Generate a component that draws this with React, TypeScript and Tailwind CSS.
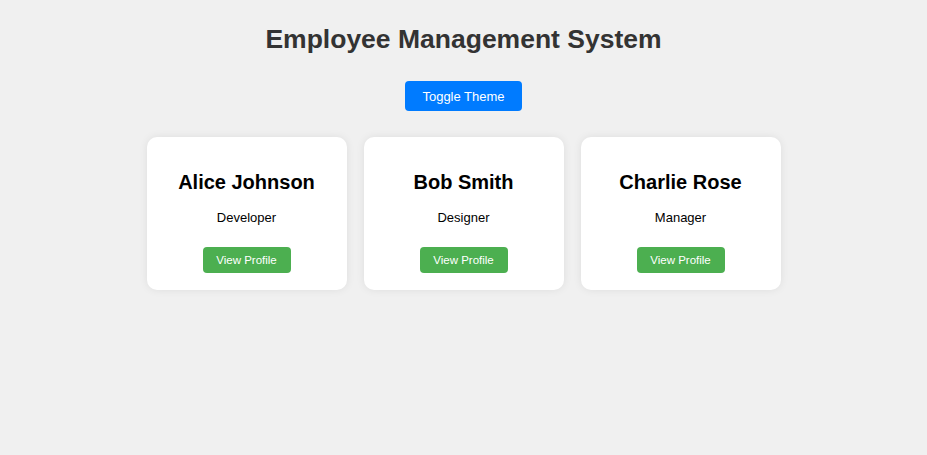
import React from 'react';

const employees = [
  { name: 'Alice Johnson', role: 'Developer' },
  { name: 'Bob Smith', role: 'Designer' },
  { name: 'Charlie Rose', role: 'Manager' },
];

const EmployeeCard: React.FC<{ name: string; role: string }> = ({ name, role }) => (
  <div className="w-[200px] rounded-[10px] bg-white pt-[34px] pb-[17px] shadow-[0_0_8px_rgba(0,0,0,0.08)] flex flex-col items-center">
    <h3 className="text-[20px] leading-[23px] font-bold text-black">{name}</h3>
    <p className="mt-[16px] text-[13px] leading-[15px] text-black">{role}</p>
    <button className="mt-[22px] h-[26px] w-[88px] rounded-[4px] bg-[#4caf50] text-white text-[11.5px] leading-[14px]">
      View Profile
    </button>
  </div>
);

const App: React.FC = () => {
  return (
    <div className="min-h-[455px] bg-[#f0f0f0] font-['Liberation_Sans',Arial,sans-serif] flex flex-col items-center pt-[24px]">
      <h1 className="text-[26.5px] leading-[30px] font-bold text-[#333333]">Employee Management System</h1>
      <button className="mt-[27px] h-[30px] w-[117px] rounded-[4px] bg-[#007bff] text-white text-[13px] leading-[15px]">
        Toggle Theme
      </button>
      <div className="mt-[26px] flex gap-[17px]">
        {employees.map((e) => (
          <EmployeeCard key={e.name} name={e.name} role={e.role} />
        ))}
      </div>
    </div>
  );
};

export default App;
